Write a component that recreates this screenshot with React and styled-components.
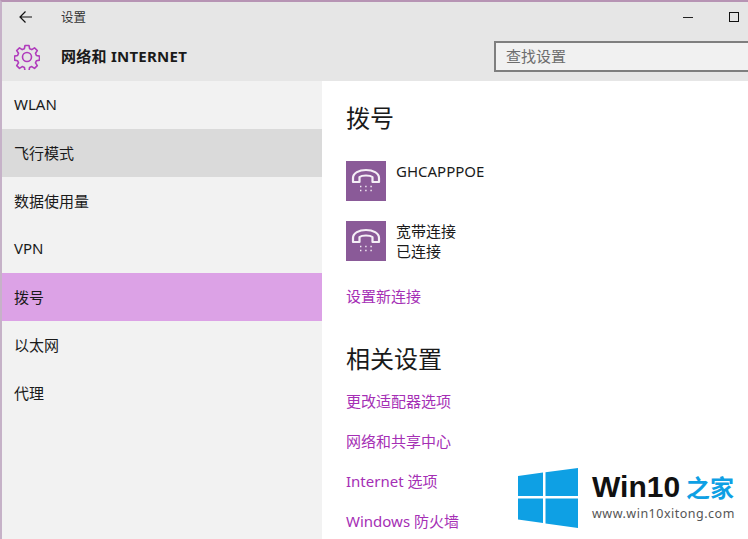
import styled, { createGlobalStyle } from "styled-components";

const GlobalStyle = createGlobalStyle`
  html, body {
    margin: 0;
    padding: 0;
    background: #fff;
    overflow: hidden;
  }
  body {
    font-family: "Noto Sans", "Noto Sans CJK SC", sans-serif;
    color: #1a1a1a;
  }
`;

const Window = styled.div`
  position: relative;
  width: 748px;
  height: 539px;
  overflow: hidden;
  box-sizing: border-box;
  border-top: 2px solid #b794b4;
  border-left: 2px solid #c6b2c8;
  display: flex;
  flex-direction: column;
`;

const Header = styled.header`
  height: 79px;
  flex-shrink: 0;
  background: #e6e6e6;
  display: flex;
  flex-direction: column;
`;

const TitleBar = styled.div`
  height: 30px;
  display: flex;
  align-items: center;
  padding-left: 17px;
`;

const BackButton = styled.svg`
  width: 14px;
  height: 14px;
  margin-right: 28px;
  fill: none;
  stroke: #111;
  stroke-width: 1.2;
`;

const WindowTitle = styled.span`
  font-size: 12.5px;
  color: #333;
  margin-bottom: 2px;
`;

const WindowControls = styled.div`
  margin-left: auto;
  display: flex;
  align-items: center;
  gap: 36px;
  padding-right: 9px;
`;

const MinimizeIcon = styled.span`
  width: 10px;
  height: 1px;
  background: #222;
`;

const MaximizeIcon = styled.span`
  width: 8px;
  height: 8px;
  border: 1px solid #111;
`;

const SectionBar = styled.div`
  flex: 1;
  display: flex;
  align-items: center;
  padding-left: 12px;
`;

const GearIcon = styled.svg`
  width: 26px;
  height: 26px;
  margin-right: 21px;
  fill: none;
  stroke: #b03cbc;
  stroke-width: 1.6;
  stroke-linejoin: round;
`;

const SectionTitle = styled.h1`
  margin: 0 0 2px;
  font-size: 15px;
  font-weight: 700;
  color: #1a1a1a;
  letter-spacing: 0.25px;
`;

const SearchBox = styled.div`
  margin-left: auto;
  width: 254px;
  height: 31px;
  box-sizing: border-box;
  border: 2px solid #7f7f7f;
  border-right: none;
  background: #f1f1f1;
  padding: 0 0 2px 10px;
  display: flex;
  align-items: center;
  font-size: 15px;
  color: #6d6d6d;
`;

const Body = styled.div`
  flex: 1;
  display: flex;
  min-height: 0;
`;

const Sidebar = styled.nav`
  width: 320px;
  flex-shrink: 0;
  background: #f2f2f2;
`;

const NavItem = styled.div`
  height: 48px;
  box-sizing: border-box;
  display: flex;
  align-items: center;
  padding: 0 0 2px 12px;
  font-size: 15px;
  color: #1a1a1a;
  background: ${(props) =>
    props.$selected ? "#dca2e6" : props.$hovered ? "#dadada" : "transparent"};
`;

const Content = styled.main`
  flex: 1;
  background: #fff;
  padding: 20px 0 0 24px;
`;

const Heading = styled.h2`
  margin: 0;
  height: 34px;
  line-height: 34px;
  font-size: 24px;
  font-weight: 400;
  color: #1a1a1a;
`;

const ConnectionList = styled.div`
  margin-top: 26px;
  display: flex;
  flex-direction: column;
  gap: 20px;
`;

const Connection = styled.div`
  display: flex;
  gap: 10px;
`;

const ConnectionIcon = styled.div`
  width: 40px;
  height: 40px;
  background: #8a5a98;
  display: flex;
  align-items: center;
  justify-content: center;
`;

const PhoneGlyph = styled.svg`
  width: 40px;
  height: 40px;
  fill: none;
  stroke: #f4eef6;
`;

const ConnectionText = styled.div`
  font-size: 15px;
  line-height: 20px;
  color: #1a1a1a;
`;

const Link = styled.a`
  display: block;
  font-size: 15px;
  line-height: 20px;
  color: ${(props) => props.$color || "#a52fb5"};
`;

const NewConnection = styled(Link)`
  margin-top: 25px;
`;

const RelatedHeading = styled(Heading)`
  margin-top: 36px;
`;

const RelatedLinks = styled.div`
  margin-top: 15px;
  display: flex;
  flex-direction: column;
  gap: 20px;
`;

const Watermark = styled.div`
  position: absolute;
  right: 0;
  bottom: 0;
  width: 246px;
  height: 89px;
  box-sizing: border-box;
  padding: 18px 0 0 16px;
  display: flex;
  gap: 14px;
  background: linear-gradient(100deg, rgba(255, 255, 255, 0) 0%, #fff 9%);
`;

const WinLogo = styled.svg`
  width: 60px;
  height: 60px;
  fill: #0ea0e4;
  flex-shrink: 0;
`;

const BrandText = styled.div`
  display: flex;
  flex-direction: column;
`;

const BrandName = styled.div`
  font-family: "Liberation Sans", sans-serif;
  font-size: 30px;
  line-height: 38px;
  font-weight: 700;
  color: #111;
  white-space: nowrap;
`;

const BrandAccent = styled.span`
  font-family: "Noto Sans CJK SC", sans-serif;
  color: #0ea0e4;
  margin-left: 6px;
  font-size: 24px;
`;

const BrandUrl = styled.div`
  font-family: "Noto Sans", sans-serif;
  font-size: 12.5px;
  line-height: 16px;
  color: #555;
  letter-spacing: 0.5px;
  white-space: nowrap;
`;

const navItems = ["WLAN", "飞行模式", "数据使用量", "VPN", "拨号", "以太网", "代理"];

const relatedLinks = ["更改适配器选项", "网络和共享中心", "Internet 选项", "Windows 防火墙"];

const Phone = () => (
  <PhoneGlyph viewBox="0 0 40 40">
    <path
      strokeWidth="2.2"
      strokeLinejoin="round"
      d="M7 21v-4c0-5 6-8 13-8s13 3 13 8v4h-6.500v-5c-2.500-2-10.500-2-13 0v5z"
    />
    <path
      strokeWidth="1.4"
      strokeDasharray="1.4 3.800"
      d="M14 25.500h13M14 29.500h13"
    />
  </PhoneGlyph>
);

const App = () => {
  return (
    <>
      <GlobalStyle />
      <Window>
        <Header>
          <TitleBar>
            <BackButton viewBox="0 0 14 14">
              <path d="M13 7H1M6.500 1.500 1 7l5.500 5.500" />
            </BackButton>
            <WindowTitle>设置</WindowTitle>
            <WindowControls>
              <MinimizeIcon />
              <MaximizeIcon />
            </WindowControls>
          </TitleBar>
          <SectionBar>
            <GearIcon viewBox="0 0 26 26">
              <path d="M11 1.500h4l.6 3.200 2.200.9 2.700-1.800 2.800 2.800-1.800 2.700.9 2.200 3.100.6v4l-3.100.6-.9 2.200 1.800 2.700-2.800 2.800-2.700-1.800-2.200.9-.6 3.200h-4l-.6-3.200-2.200-.9-2.700 1.800-2.800-2.800 1.800-2.700-.9-2.200-3.100-.6v-4l3.100-.6.9-2.200-1.800-2.700 2.800-2.800 2.700 1.800 2.200-.9z" />
              <circle cx="13" cy="13" r="4.500" />
            </GearIcon>
            <SectionTitle>网络和 INTERNET</SectionTitle>
            <SearchBox>查找设置</SearchBox>
          </SectionBar>
        </Header>
        <Body>
          <Sidebar>
            {navItems.map((item) => (
              <NavItem
                key={item}
                $selected={item === "拨号"}
                $hovered={item === "飞行模式"}
              >
                {item}
              </NavItem>
            ))}
          </Sidebar>
          <Content>
            <Heading>拨号</Heading>
            <ConnectionList>
              <Connection>
                <ConnectionIcon>
                  <Phone />
                </ConnectionIcon>
                <ConnectionText>GHCAPPPOE</ConnectionText>
              </Connection>
              <Connection>
                <ConnectionIcon>
                  <Phone />
                </ConnectionIcon>
                <ConnectionText>
                  宽带连接
                  <br />
                  已连接
                </ConnectionText>
              </Connection>
            </ConnectionList>
            <NewConnection>设置新连接</NewConnection>
            <RelatedHeading>相关设置</RelatedHeading>
            <RelatedLinks>
              {relatedLinks.map((link) => (
                <Link key={link}>{link}</Link>
              ))}
            </RelatedLinks>
          </Content>
        </Body>
        <Watermark>
          <WinLogo viewBox="0 0 60 60">
            <path d="M0 8 25 4.500V28H0zM27.500 4.200 60 0v28H27.500zM0 30.500h25V55L0 51.500zM27.500 30.500H60V60L27.500 55.500z" />
          </WinLogo>
          <BrandText>
            <BrandName>
              Win10<BrandAccent>之家</BrandAccent>
            </BrandName>
            <BrandUrl>www.win10xitong.com</BrandUrl>
          </BrandText>
        </Watermark>
      </Window>
    </>
  );
};

export default App;
